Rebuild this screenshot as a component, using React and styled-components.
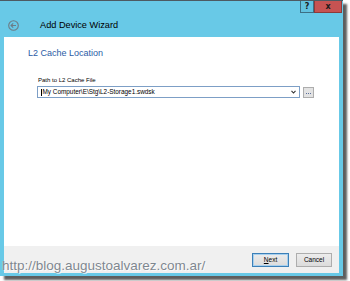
import styled, { createGlobalStyle } from 'styled-components';

const GlobalStyle = createGlobalStyle`
  html, body {
    margin: 0;
    padding: 0;
    background: #ffffff;
  }
  body {
    font-family: "Liberation Sans", Arial, sans-serif;
  }
`;

const Stage = styled.div`
  position: relative;
  width: 350px;
  height: 281px;
  overflow: hidden;
`;

const Window = styled.div`
  width: 343px;
  height: 276px;
  box-sizing: border-box;
  display: flex;
  flex-direction: column;
  background: #68c9e7;
  border-top: 1px solid #4d5a62;
  box-shadow: 4px 4px 2px rgba(40, 40, 40, 0.75);
`;

const TitleBar = styled.div`
  display: flex;
  flex-direction: column;
  height: 36px;
`;

const CaptionRow = styled.div`
  display: flex;
  justify-content: flex-end;
  height: 12px;
  padding-right: 1px;
`;

const CaptionButton = styled.div`
  box-sizing: border-box;
  width: ${(p) => p.w}px;
  height: 12px;
  display: flex;
  align-items: center;
  justify-content: center;
  background: ${(p) => (p.close ? '#c65352' : '#62c2e0')};
  border: 1px solid ${(p) => (p.close ? '#8e3a39' : '#3d6f84')};
  border-top: none;
  font-family: "DejaVu Sans", sans-serif;
  font-weight: bold;
  font-size: 8px;
  color: #1b1b1b;
  line-height: 1;
`;

const HeaderRow = styled.div`
  display: flex;
  align-items: center;
  height: 24px;
  padding-left: 8px;
`;

const BackButton = styled.div`
  width: 11px;
  height: 11px;
  display: flex;
`;

const Title = styled.span`
  margin-left: 21px;
  font-size: 9.2px;
  color: #000;
  line-height: 11px;
`;

const Body = styled.div`
  flex: 1;
  display: flex;
  padding: 0 4px 3px 4px;
`;

const Panel = styled.div`
  flex: 1;
  display: flex;
  flex-direction: column;
  background: #ffffff;
`;

const Content = styled.div`
  flex: 1;
  padding: 11px 0 0 24px;
`;

const Heading = styled.div`
  font-size: 9px;
  line-height: 11px;
  color: #2b5ca6;
`;

const Field = styled.div`
  margin: 17px 0 0 9px;
  display: flex;
  flex-direction: column;
`;

const Label = styled.div`
  font-size: 6px;
  line-height: 8px;
  color: #000;
  padding-left: 1px;
`;

const FieldRow = styled.div`
  display: flex;
  align-items: center;
  margin-top: 2px;
  gap: 3px;
`;

const Combo = styled.div`
  box-sizing: border-box;
  width: 263px;
  height: 12px;
  border: 1px solid #7d9fc6;
  display: flex;
  align-items: center;
  padding: 0 3px 0 3px;
  background: #fff;
`;

const Caret = styled.span`
  width: 1px;
  height: 7px;
  background: #000;
  margin-right: 0.5px;
`;

const ComboText = styled.span`
  flex: 1;
  font-size: 6.4px;
  line-height: 10px;
  color: #000;
  white-space: nowrap;
`;

const BrowseButton = styled.div`
  box-sizing: border-box;
  width: 11px;
  height: 11px;
  border: 1px solid #adadad;
  background: #e3e3e3;
  display: flex;
  align-items: flex-end;
  justify-content: center;
  padding-bottom: 3px;
  gap: 1px;
`;

const Dot = styled.span`
  width: 1px;
  height: 1px;
  background: #5a6e9a;
`;

const Footer = styled.div`
  height: 27px;
  box-sizing: border-box;
  background: #f0f0f0;
  display: flex;
  justify-content: flex-end;
  align-items: flex-start;
  padding: 7px 7px 0 0;
  gap: 7px;
`;

const Button = styled.div`
  box-sizing: border-box;
  width: ${(p) => p.w}px;
  height: 14px;
  display: flex;
  align-items: center;
  justify-content: center;
  background: linear-gradient(#ececec, #dcdcdc);
  border: 1px solid ${(p) => (p.primary ? '#3c80b8' : '#adadad')};
  box-shadow: ${(p) => (p.primary ? 'inset 0 0 0 1px #a8d0ee' : 'none')};
  font-size: 6.5px;
  color: #000;
  line-height: 1;
`;

const Watermark = styled.div`
  position: absolute;
  left: 2px;
  top: 258px;
  font-family: "Liberation Sans", Arial, sans-serif;
  font-size: 13.5px;
  line-height: 16px;
  color: #7e878f;
  text-shadow: 0 0 1px #fff, 1px 1px 0 rgba(255, 255, 255, 0.7);
  white-space: nowrap;
`;

const BackIcon = () => (
  <svg width="11" height="11" viewBox="0 0 11 11">
    <circle cx="5.5" cy="5.5" r="4.8" fill="none" stroke="#6c7c86" strokeWidth="1.1" />
    <path d="M3 5.5 H8 M5.2 3.3 L3 5.5 L5.2 7.7" fill="none" stroke="#6c7c86" strokeWidth="1.1" />
  </svg>
);

const ArrowIcon = () => (
  <svg width="5" height="4" viewBox="0 0 5 4">
    <path d="M0.5 0.8 L2.5 3 L4.5 0.8" fill="none" stroke="#333" strokeWidth="1.1" />
  </svg>
);

const App = () => {
  return (
    <Stage>
      <GlobalStyle />
      <Window>
        <TitleBar>
          <CaptionRow>
            <CaptionButton w={14}>?</CaptionButton>
            <CaptionButton w={28} close>
              x
            </CaptionButton>
          </CaptionRow>
          <HeaderRow>
            <BackButton>
              <BackIcon />
            </BackButton>
            <Title>Add Device Wizard</Title>
          </HeaderRow>
        </TitleBar>
        <Body>
          <Panel>
            <Content>
              <Heading>L2 Cache Location</Heading>
              <Field>
                <Label>Path to L2 Cache File</Label>
                <FieldRow>
                  <Combo>
                    <Caret />
                    <ComboText>My Computer\E\Stg\L2-Storage1.swdsk</ComboText>
                    <ArrowIcon />
                  </Combo>
                  <BrowseButton>
                    <Dot />
                    <Dot />
                    <Dot />
                  </BrowseButton>
                </FieldRow>
              </Field>
            </Content>
            <Footer>
              <Button w={37} primary>
                <span>
                  <u>N</u>ext
                </span>
              </Button>
              <Button w={36}>Cancel</Button>
            </Footer>
          </Panel>
        </Body>
      </Window>
      <Watermark>http://blog.augustoalvarez.com.ar/</Watermark>
    </Stage>
  );
};

export default App;
